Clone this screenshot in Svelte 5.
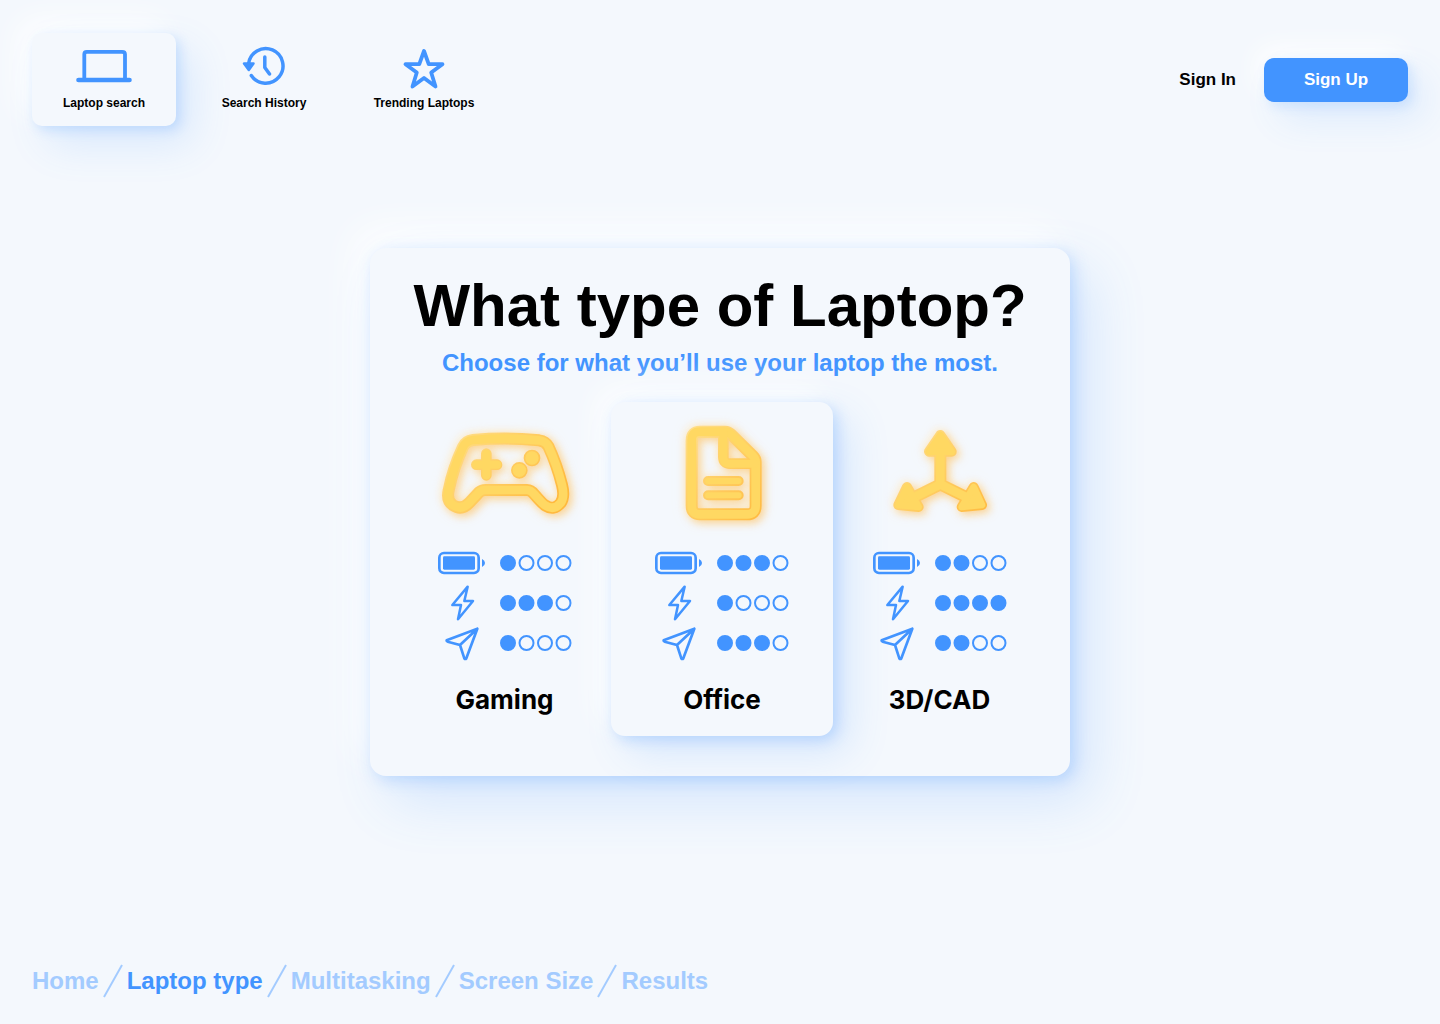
<script>
  const navItems = [
    { label: 'Laptop search', icon: 'laptop', active: true },
    { label: 'Search History', icon: 'history', active: false },
    { label: 'Trending Laptops', icon: 'star', active: false }
  ];
  const metrics = ['Battery', 'Power', 'Portability'];
  const options = [
    { name: 'Gaming', icon: 'gamepad', scores: [1, 3, 1], view: '-16 0 480 360' },
    { name: 'Office', icon: 'document', scores: [3, 1, 3], view: '-54 0 480 360' },
    { name: '3D/CAD', icon: 'axes', scores: [2, 4, 2], view: '-61 0 480 360' }
  ];
  const steps = ['Home', 'Laptop type', 'Multitasking', 'Screen Size', 'Results'];
  let selected = $state('Office');
  let step = $state('Laptop type');
</script>

{#snippet shapes(kind)}
  {#if kind === 'gamepad'}
    <path class="thick" d="M128 75Q228 66 326 76Q346 79 354 94Q380 150 395 210Q404 245 391 264Q371 288 346 272Q338 268 312 238Q302 225 290 225H166Q154 225 146 232L118 262Q94 288 67 270Q48 256 55 226Q68 160 98 96Q106 78 128 75Z" />
    <path class="mid" d="M138 149H200M168 116V181" />
    <circle class="solid" cx="305" cy="129" r="18" />
    <circle class="solid" cx="267" cy="166" r="18" />
  {:else if kind === 'document'}
    <path class="thick" d="M120 50H196Q204 50 212 57L279 123Q287 131 287 141V272Q287 298 261 298H120Q95 298 95 272V76Q95 50 120 50Z" />
    <path class="mid" d="M190 54V125Q190 146 210 146H283" />
    <path class="thin" d="M144 198H236M144 241H236" />
  {:else}
    <path class="thick" d="M180 110V208L95 250M180 208L265 250" />
    <path class="head solid" d="M180 60L146 110H214ZM80 216L54 270L115 276ZM280 216L305 270L244 276Z" />
  {/if}
{/snippet}

<svg class="defs" width="0" height="0" aria-hidden="true">
  <defs>
    <linearGradient id="rim" gradientUnits="userSpaceOnUse" x1="60" y1="40" x2="330" y2="300">
      <stop offset="0" stop-color="#ffe08c" />
      <stop offset="0.5" stop-color="#ffcd62" />
      <stop offset="1" stop-color="#ffb93e" />
    </linearGradient>
  </defs>
</svg>

<div class="page">
  <header>
    <nav class="tabs" aria-label="Main">
      {#each navItems as item}
        <a href="#{item.icon}" class="tab" class:active={item.active}>
          <svg class="line" width="60" height="48" viewBox="0 0 60 48" aria-hidden="true">
            {#if item.icon === 'laptop'}
              <path stroke-width="3.8" d="M10.300 38V12.300Q10.300 9.800 12.800 9.800H48.200Q51 9.800 51 12.300V38" />
              <path stroke-width="4.600" d="M4.500 38H55.500" />
            {:else if item.icon === 'history'}
              <path stroke-width="3.500" d="M14.500 22A17.300 17.300 0 1 1 17.300 33.500M30.800 15V25.500L35.500 32" />
              <path class="fill" stroke-width="2.500" d="M10 21.500H19.500L14.800 28Z" />
            {:else}
              <path stroke-width="3.800" d="M30 9L34.700 22.200H48.500L37.200 30.500L41.500 44.500L30 36L18.500 44.500L22.800 30.500L11.500 22.200H25.300Z" />
            {/if}
          </svg>
          <span>{item.label}</span>
        </a>
      {/each}
    </nav>
    <div class="account">
      <a href="#signin" class="signin">Sign In</a>
      <button type="button" class="signup">Sign Up</button>
    </div>
  </header>

  <main>
    <section class="panel">
      <h1>What type of Laptop?</h1>
      <p class="lead">Choose for what you’ll use your laptop the most.</p>
      <div class="options">
        {#each options as option}
          <button
            type="button"
            class="option"
            class:selected={selected === option.name}
            aria-pressed={selected === option.name}
            onclick={() => (selected = option.name)}
          >
            <svg class="art" width="160" height="120" viewBox={option.view} aria-hidden="true">
              <g class="edge">{@render shapes(option.icon)}</g>
              <g class="face">{@render shapes(option.icon)}</g>
            </svg>
            <span class="specs">
              {#each option.scores as score, row}
                <span class="spec">
                  <svg class="line" width="48" height="40" viewBox="0 0 144 120" aria-hidden="true">
                    {#if row === 0}
                      <rect x="4" y="30" width="118" height="60" rx="14" stroke-width="8" />
                      <rect class="block" x="15" y="40" width="96" height="40" rx="4" />
                      <path class="block" d="M132 48Q141 52 141 60Q141 68 132 72Z" />
                    {:else if row === 1}
                      <path stroke-width="7.500" d="M89 11L43 66H69L60 109L105 54H79Z" />
                    {:else}
                      <path stroke-width="8" d="M118 17L26 52Q25 54 29 56L66 66L79 106Q82 110 85 106ZM66 66L118 17" />
                    {/if}
                  </svg>
                  <svg class="dots" width="72" height="16" viewBox="0 0 72 16" role="img" aria-label="{metrics[row]}: {score} of 4">
                    {#each [0, 1, 2, 3] as i}
                      <circle class:on={i < score} cx={8 + i * 18.5} cy="8" r="7" />
                    {/each}
                  </svg>
                </span>
              {/each}
            </span>
            <span class="name">{option.name}</span>
          </button>
        {/each}
      </div>
    </section>
  </main>

  <footer>
    <nav class="crumbs" aria-label="Progress">
      {#each steps as name, i}
        {#if i > 0}
          <svg class="slash" width="20" height="34" viewBox="0 0 20 34" aria-hidden="true"><path d="M1 33L19 1" /></svg>
        {/if}
        <a href="#step-{i}" class:current={step === name} aria-current={step === name ? 'step' : undefined} onclick={() => (step = name)}>{name}</a>
      {/each}
    </nav>
  </footer>
</div>

<style>
  :global(body) {
    background: #f4f8fd;
  }
  .page {
    --blue: #4294ff;
    --bg: #f4f8fd;
    box-sizing: border-box;
    min-height: 100vh;
    display: flex;
    flex-direction: column;
    overflow: hidden;
    background: var(--bg);
    color: #000;
    font-family: 'Liberation Sans', Arial, sans-serif;
    font-weight: 700;
  }
  .defs {
    position: absolute;
  }
  a {
    color: inherit;
    text-decoration: none;
  }
  button {
    border: 0;
    padding: 0;
    background: none;
    color: inherit;
    font: inherit;
    cursor: pointer;
  }
  svg {
    display: block;
  }
  header {
    display: flex;
    justify-content: space-between;
    align-items: center;
    padding: 33px 32px 0;
  }
  .tabs {
    display: flex;
    gap: 16px;
  }
  .tab {
    box-sizing: border-box;
    width: 144px;
    padding: 9px 0 15px;
    display: flex;
    flex-direction: column;
    align-items: center;
    gap: 5px;
    border-radius: 10px;
    font-size: 12px;
    line-height: 16px;
    white-space: nowrap;
  }
  .tab.active {
    background: var(--bg);
    box-shadow:
      4px 4px 12px rgba(66, 148, 255, 0.22),
      16px 18px 40px rgba(66, 148, 255, 0.15),
      -12px -12px 32px #fff;
  }
  .line {
    fill: none;
    stroke: var(--blue);
    stroke-linecap: round;
    stroke-linejoin: round;
  }
  .line .fill {
    fill: var(--blue);
  }
  .line .block {
    fill: var(--blue);
    stroke: none;
  }
  .account {
    display: flex;
    align-items: center;
    gap: 28px;
    font-size: 17px;
    line-height: 20px;
  }
  .signup {
    width: 144px;
    height: 44px;
    border-radius: 10px;
    background: var(--blue);
    color: #fff;
    box-shadow:
      4px 4px 12px rgba(66, 148, 255, 0.18),
      16px 18px 36px rgba(66, 148, 255, 0.12),
      -6px -10px 28px #fff;
  }
  main {
    flex: 1;
    display: flex;
    align-items: center;
    justify-content: center;
    padding-bottom: 66px;
  }
  .panel {
    box-sizing: border-box;
    max-width: 700px;
    flex: 1;
    padding: 26px 24px 40px 28px;
    border-radius: 16px;
    background: var(--bg);
    box-shadow:
      4px 4px 16px rgba(66, 148, 255, 0.26),
      20px 24px 56px rgba(66, 148, 255, 0.18),
      -14px -18px 40px #fff;
  }
  h1,
  .lead {
    padding-right: 4px;
  }
  h1 {
    margin: 0;
    font-size: 60px;
    line-height: 64px;
    text-align: center;
    white-space: nowrap;
  }
  .lead {
    margin: 10px 0 24px;
    color: var(--blue);
    font-size: 24px;
    line-height: 30px;
    text-align: center;
  }
  .options {
    display: grid;
    grid-template-columns: 1fr 222px 1fr;
  }
  .option {
    display: flex;
    flex-direction: column;
    align-items: center;
    padding: 13px 0 20px;
    border-radius: 14px;
  }
  .option.selected {
    background: var(--bg);
    box-shadow:
      4px 4px 14px rgba(66, 148, 255, 0.26),
      16px 16px 40px rgba(66, 148, 255, 0.17),
      -12px -12px 32px #fff;
  }
  .art {
    overflow: visible;
    fill: none;
    stroke-linecap: round;
    stroke-linejoin: round;
    filter: drop-shadow(3px 3px 4px rgba(255, 178, 56, 0.5)) drop-shadow(-2px -2px 4px rgba(255, 236, 200, 0.6));
  }
  .edge {
    stroke: url(#rim);
  }
  .face {
    stroke: #ffd862;
  }
  .edge .thick {
    stroke-width: 36px;
  }
  .face .thick {
    stroke-width: 26px;
  }
  .edge .head {
    stroke-width: 30px;
  }
  .face .head {
    stroke-width: 20px;
  }
  .edge .mid {
    stroke-width: 32px;
  }
  .face .mid {
    stroke-width: 24px;
  }
  .edge .thin {
    stroke-width: 30px;
  }
  .face .thin {
    stroke-width: 18px;
  }
  .edge .solid {
    fill: url(#rim);
  }
  .face .solid {
    fill: #ffd862;
  }
  .edge circle {
    stroke-width: 14px;
  }
  .face circle {
    stroke-width: 4px;
  }
  .specs {
    padding-top: 8px;
  }
  .spec {
    display: flex;
    align-items: center;
    gap: 14px;
  }
  .dots {
    overflow: visible;
  }
  .dots circle {
    fill: none;
    stroke: var(--blue);
    stroke-width: 2px;
  }
  .dots .on {
    fill: var(--blue);
  }
  .name {
    padding-top: 21px;
    font-family: Inter, sans-serif;
    font-size: 26px;
    line-height: 32px;
  }
  footer {
    padding: 0 32px 26px;
  }
  .crumbs {
    display: flex;
    flex-wrap: wrap;
    align-items: center;
    column-gap: 4px;
    color: #a3cbff;
    font-size: 24px;
    line-height: 34px;
  }
  .current {
    color: var(--blue);
  }
  .slash {
    fill: none;
    stroke: #a3cbff;
    stroke-width: 2px;
  }
</style>
